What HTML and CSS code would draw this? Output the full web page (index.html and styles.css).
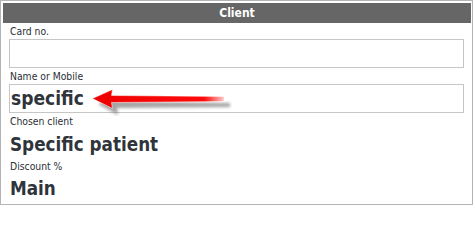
FILE: index.html
```html
<!DOCTYPE html>
<html>
<head>
<meta charset="utf-8">
<link rel="stylesheet" href="styles.css">
</head>
<body>
<div class="panel">
  <div class="header">Client</div>
  <div class="content">
    <div class="label l1">Card no.</div>
    <div class="input"></div>
    <div class="label l2">Name or Mobile</div>
    <div class="input typed">specific</div>
    <div class="label l3">Chosen client</div>
    <div class="value v3">Specific patient</div>
    <div class="label l4">Discount %</div>
    <div class="value v4">Main</div>
  </div>
  <svg class="arrow" width="150" height="30" viewBox="0 0 150 30">
    <defs>
      <linearGradient id="shaft" x1="0" y1="0" x2="1" y2="0">
        <stop offset="0" stop-color="#ee0000"/>
        <stop offset="0.85" stop-color="#ff0a0a"/>
        <stop offset="1" stop-color="#ffc8c8"/>
      </linearGradient>
      <filter id="blur" x="-20%" y="-50%" width="140%" height="200%">
        <feGaussianBlur stdDeviation="1.6"/>
      </filter>
    </defs>
    <polygon points="6,15 26,7 25,12 138,14 138,18 25,19 26,26" fill="#6a6a6a" opacity="0.6" filter="url(#blur)" transform="translate(2,3)"/>
    <polygon points="2.5,12.5 22.5,3.5 21.5,9.5 134,10.5 134,15.5 21.5,16.5 22.5,22.5" fill="url(#shaft)" stroke="#fff" stroke-width="0.5" stroke-linejoin="round"/>
  </svg>
</div>
</body>
</html>
```

FILE: styles.css
```css
html, body {
  margin: 0;
  padding: 0;
  background: #fff;
}
.panel {
  position: relative;
  width: 473px;
  height: 205px;
  box-sizing: border-box;
  border: 1px solid #b4b4b4;
  padding: 2px 1px 2px 2px;
  font-family: "DejaVu Sans Condensed", "DejaVu Sans", sans-serif;
  color: #333;
}
.header {
  height: 20px;
  background: #666;
  color: #fff;
  font-weight: bold;
  font-size: 12px;
  line-height: 20px;
  text-align: center;
}
.content {
  display: flex;
  flex-direction: column;
  padding-left: 6px;
}
.label {
  font-size: 10.3px;
  padding-left: 1px;
  color: #2a2f35;
}
.l1, .l2 {
  height: 16px;
  line-height: 17px;
}
.l3 {
  height: 17px;
  line-height: 17px;
}
.l4 {
  height: 18px;
  line-height: 20px;
}
.input {
  width: 455px;
  height: 29px;
  box-sizing: border-box;
  border: 1px solid #c6c6c6;
  background: #fff;
}
.typed {
  font-size: 19px;
  font-weight: bold;
  line-height: 27px;
  padding-left: 1px;
  color: #2f343a;
}
.value {
  font-weight: bold;
  font-size: 18.7px;
  color: #2f343a;
  padding-left: 1px;
}
.v3 {
  height: 26px;
  line-height: 30px;
}
.v4 {
  height: 27px;
  line-height: 30px;
}
.arrow {
  position: absolute;
  left: 89px;
  top: 85px;
}
```
